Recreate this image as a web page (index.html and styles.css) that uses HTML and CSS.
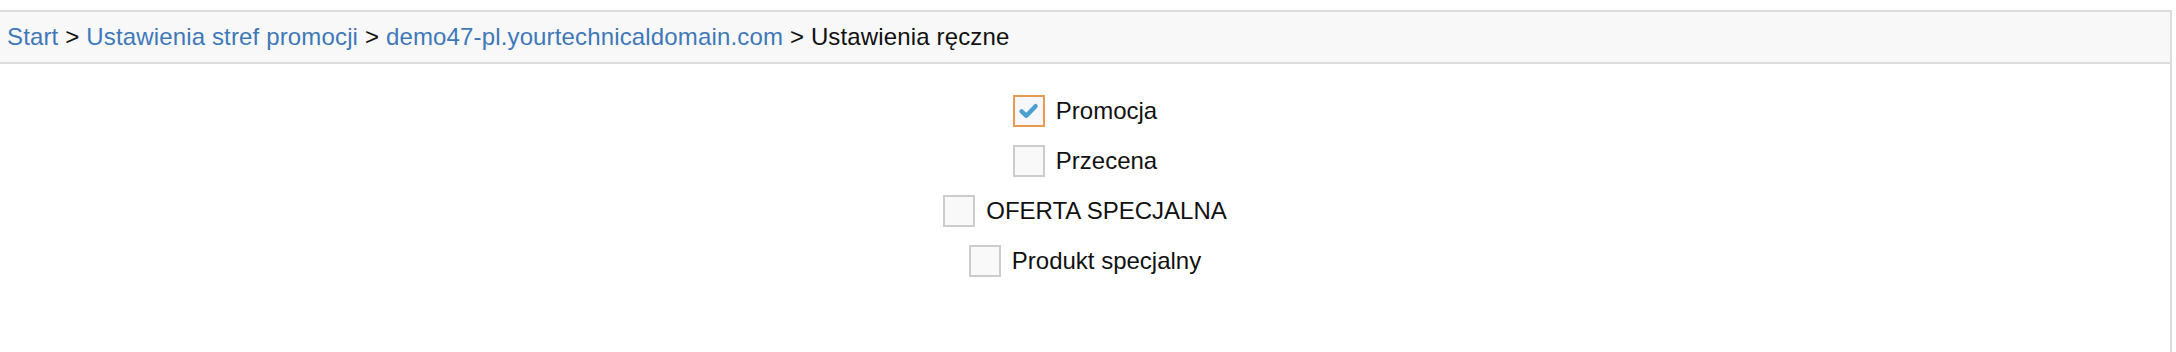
FILE: index.html
```html
<!DOCTYPE html>
<html lang="pl">
<head>
<meta charset="utf-8">
<title>Ustawienia ręczne</title>
<link rel="stylesheet" href="styles.css">
</head>
<body>
<div class="panel">
  <div class="crumbs">
    <a href="#">Start</a> &gt; <a href="#">Ustawienia stref promocji</a> &gt; <a href="#">demo47-pl.yourtechnicaldomain.com</a> &gt; <span>Ustawienia ręczne</span>
  </div>
  <div class="options">
    <label class="opt">
      <span class="box checked">
        <svg viewBox="0 0 32 32" width="28" height="28"><path d="M7.5 16.5 L13 21.5 L23.5 10.5" fill="none" stroke="#4d9fd0" stroke-width="5" stroke-linecap="round" stroke-linejoin="round"/></svg>
      </span>
      <span class="txt">Promocja</span>
    </label>
    <label class="opt">
      <span class="box"></span>
      <span class="txt">Przecena</span>
    </label>
    <label class="opt">
      <span class="box"></span>
      <span class="txt">OFERTA SPECJALNA</span>
    </label>
    <label class="opt">
      <span class="box"></span>
      <span class="txt">Produkt specjalny</span>
    </label>
  </div>
</div>
</body>
</html>
```

FILE: styles.css
```css
html, body {
  margin: 0;
  padding: 0;
  background: #ffffff;
  overflow: hidden;
}
body {
  font-family: "Liberation Sans", Arial, Helvetica, sans-serif;
  font-size: 24px;
  color: #111;
}
.panel {
  margin-top: 10px;
  width: 2170px;
  height: 342px;
  border-right: 2px solid #dddddd;
}
.crumbs {
  box-sizing: border-box;
  height: 54px;
  border-top: 2px solid #dddddd;
  border-bottom: 2px solid #dddddd;
  background: #f8f8f8;
  padding-left: 7px;
  display: flex;
  align-items: center;
  white-space: pre;
  letter-spacing: 0.15px;
  color: #111;
}
.crumbs a {
  color: #3f78b8;
  text-decoration: none;
}
.options {
  display: flex;
  flex-direction: column;
  align-items: center;
  padding-top: 31px;
  gap: 18px;
}
.opt {
  display: flex;
  align-items: center;
  gap: 11px;
  cursor: pointer;
}
.box {
  box-sizing: border-box;
  width: 32px;
  height: 32px;
  border: 2px solid #cccccc;
  background: #f9f9f9;
  display: flex;
  align-items: center;
  justify-content: center;
}
.box.checked {
  border-color: #e99a52;
  background: #f5f7fb;
}
.txt {
  line-height: 32px;
}
```
